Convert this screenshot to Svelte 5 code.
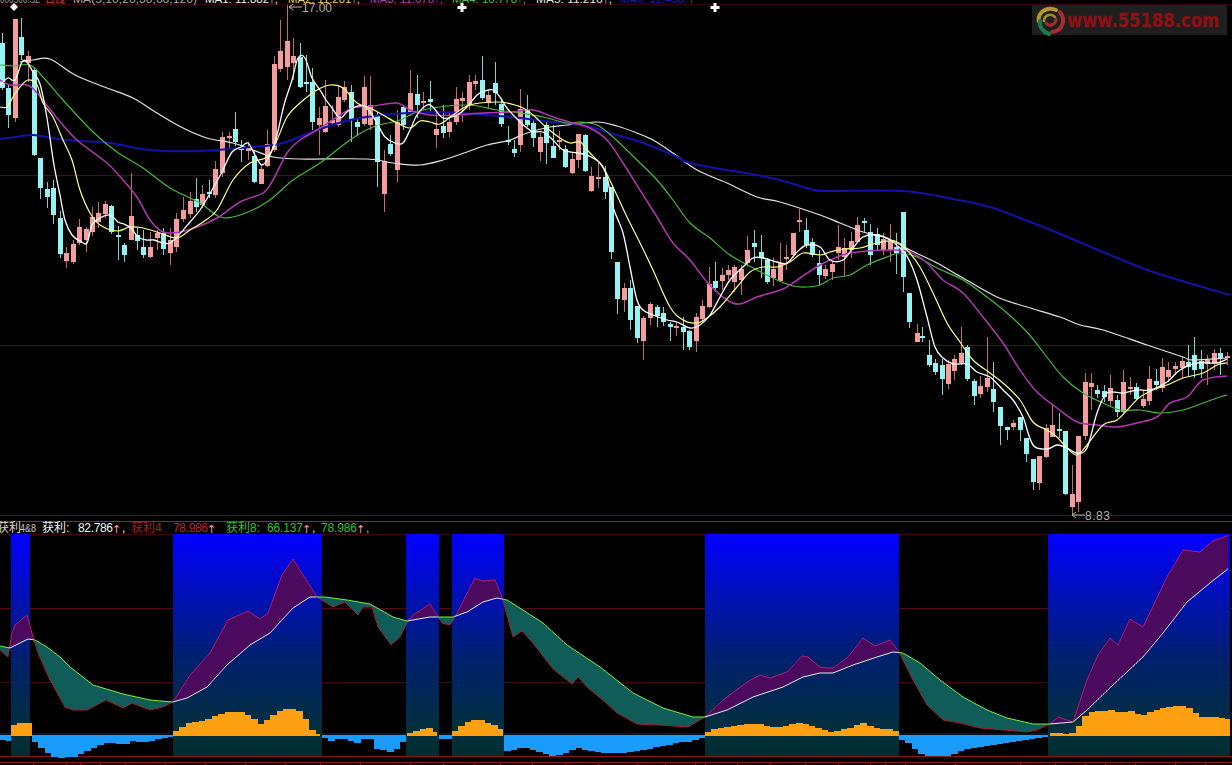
<script>
  // chart data, all in screen pixels: [x, bodyTop, bodyBottom, high, low, up]
  const candles = [
    [2,43,88,33,90,0],[8,88,115,85,128,0],[15,19,118,19,122,1],[21,37,55,18,60,0],[28,56,63,51,82,1],[34,70,155,68,156,0],
    [40,158,188,158,199,0],[47,189,197,182,208,0],[53,188,215,180,224,0],[60,218,254,211,258,0],[66,253,261,247,268,1],[73,244,262,240,264,1],
    [79,227,243,219,245,1],[86,229,240,227,252,1],[92,217,232,207,236,1],[98,213,222,202,228,1],[105,204,214,201,218,1],[111,206,232,205,234,0],
    [118,235,237,226,260,0],[124,245,255,243,262,0],[131,216,240,173,240,1],[137,235,241,228,250,0],[143,247,255,230,258,0],[150,247,257,232,258,1],
    [157,233,238,230,250,1],[163,233,249,228,255,0],[170,240,253,228,265,1],[176,219,247,213,252,1],[183,210,219,197,222,1],[190,201,214,192,218,1],
    [196,199,207,178,212,0],[202,194,205,185,208,1],[209,192,194,180,198,0],[215,169,195,161,198,1],[222,137,173,132,177,1],[229,136,138,132,150,1],
    [235,129,142,112,146,0],[241,147,150,140,162,0],[248,147,151,142,160,1],[254,156,182,150,183,0],[261,169,184,165,184,1],[267,144,166,130,167,1],
    [274,64,150,56,152,1],[280,51,69,20,72,1],[287,41,67,5,80,1],[293,56,63,38,80,1],[300,57,87,43,88,0],[306,82,84,55,92,0],
    [312,82,122,68,130,0],[319,118,125,107,155,1],[325,106,132,80,133,1],[332,120,123,105,125,1],[338,97,125,85,127,1],[344,87,100,81,102,1],
    [351,92,120,85,142,0],[357,122,127,118,136,0],[364,87,124,76,126,1],[370,105,125,76,130,1],[377,115,162,112,187,0],[384,161,194,150,212,1],
    [390,144,154,135,156,0],[397,122,170,110,182,1],[403,107,125,105,130,0],[410,93,113,70,116,1],[417,94,105,75,118,0],[423,101,103,92,110,1],
    [430,99,102,81,112,0],[436,129,135,112,148,1],[443,126,133,105,138,0],[449,122,132,112,137,1],[456,99,122,87,125,1],[462,98,101,92,122,1],
    [469,82,105,75,110,1],[475,81,84,75,90,1],[482,80,98,56,100,0],[488,95,103,90,108,1],[495,83,93,62,105,0],[501,104,124,100,127,0],
    [508,140,142,126,145,0],[514,149,153,140,157,0],[520,109,145,89,152,1],[527,110,125,95,127,0],[533,123,138,120,147,0],[540,137,152,133,161,1],
    [546,125,143,122,164,0],[553,146,158,125,158,0],[559,140,142,131,150,1],[565,149,167,145,168,0],[572,159,173,153,174,1],[578,134,160,134,168,1],
    [585,135,171,134,172,0],[591,176,191,167,192,1],[598,177,179,163,188,1],[605,177,192,166,199,0],[611,187,252,187,259,0],[617,262,299,262,314,0],
    [624,288,300,283,312,1],[630,288,320,280,330,0],[637,306,338,306,343,0],[643,318,341,316,360,1],[650,304,318,302,325,1],[657,307,316,305,327,0],
    [663,313,322,307,326,0],[670,324,327,322,341,0],[676,326,328,322,336,1],[683,327,332,317,350,0],[689,331,347,330,350,0],[696,317,341,313,352,1],
    [702,306,319,300,322,1],[709,284,307,267,308,1],[715,281,288,262,292,0],[722,275,281,268,290,1],[728,270,275,265,280,1],[734,267,282,265,292,1],
    [741,269,280,265,295,1],[747,250,263,236,266,1],[754,243,247,230,262,0],[761,252,258,235,278,0],[767,260,282,258,284,0],[773,269,278,258,286,1],
    [780,263,281,243,282,1],[786,257,259,245,270,1],[793,233,255,233,258,1],[799,220,222,209,232,1],[806,230,245,218,248,0],[812,242,255,238,257,0],
    [819,263,275,250,285,0],[825,269,276,265,279,1],[832,264,272,262,280,1],[838,247,253,225,260,1],[844,248,257,238,276,1],[851,241,250,232,258,1],
    [857,225,242,217,243,1],[864,221,223,218,233,0],[870,232,255,224,265,0],[877,234,245,228,250,0],[883,239,250,233,255,1],[890,241,250,224,262,1],
    [896,247,253,233,274,0],[903,212,277,212,292,0],[909,293,322,293,328,0],[917,333,342,324,342,1],[922,336,338,327,342,0],[929,355,365,340,367,0],
    [935,363,372,359,375,0],[942,365,379,359,395,0],[948,364,384,360,389,1],[954,359,371,355,380,1],[961,353,363,327,365,1],[967,347,379,345,381,0],
    [974,381,396,379,405,0],[980,386,394,376,398,1],[987,378,387,337,392,1],[993,389,402,362,412,0],[1000,407,426,407,445,0],[1007,427,430,427,440,0],
    [1013,423,427,420,430,1],[1020,417,430,417,441,0],[1026,438,454,438,462,0],[1033,459,482,459,490,0],[1039,456,483,456,490,1],[1046,428,457,424,458,1],
    [1052,425,437,405,437,1],[1059,429,431,413,438,0],[1065,431,494,431,495,0],[1072,494,507,465,516,1],[1078,436,502,436,512,1],[1085,382,436,373,440,1],
    [1091,383,387,373,410,1],[1097,390,394,385,398,0],[1104,391,397,385,402,0],[1110,388,401,375,406,1],[1117,400,412,395,417,0],[1123,382,412,370,414,1],
    [1130,387,389,377,395,1],[1136,387,399,383,400,0],[1143,399,406,390,408,1],[1149,379,401,366,405,1],[1156,381,385,369,390,0],[1162,367,388,358,392,1],
    [1168,370,377,362,382,1],[1175,366,369,362,375,1],[1182,361,368,357,378,1],[1188,362,367,345,377,0],[1194,355,370,337,378,0],[1201,361,369,350,378,0],
    [1207,360,364,355,385,1],[1214,353,363,349,370,1],[1220,353,359,348,375,0],[1227,356,358,352,365,1]
  ];

  const ma5 = [[0,85],[8,78],[15,80],[22,62],[27,62],[33,72],[40,84],[47,118],[54,165],[60,195],[65,220],[72,235],[80,241],[87,243],[92,225],[100,218],[110,215],[118,222],[124,224],[131,228],[138,237],[146,240],[154,240],[163,243],[170,243],[178,236],[190,222],[200,210],[212,190],[222,172],[232,152],[241,147],[248,143],[255,155],[262,165],[270,155],[277,135],[284,105],[292,80],[298,58],[305,58],[312,78],[320,90],[326,100],[332,108],[340,118],[347,112],[355,107],[364,106],[372,115],[378,125],[385,137],[395,143],[403,143],[410,130],[417,115],[427,105],[433,107],[443,118],[457,115],[467,107],[477,95],[485,91],[493,90],[500,97],[507,108],[520,122],[527,128],[533,132],[543,132],[553,140],[563,150],[577,153],[587,155],[600,163],[607,177],[613,207],[623,233],[630,267],[637,300],[643,310],[653,315],[667,320],[677,322],[690,328],[700,325],[710,315],[720,297],[730,280],[743,267],[753,258],[763,258],[777,262],[787,263],[797,252],[807,245],[820,247],[830,260],[843,260],[853,248],[863,237],[877,235],[890,240],[900,248],[908,258],[917,280],[927,317],[935,347],[943,358],[953,364],[967,364],[977,372],[990,377],[1003,390],[1013,400],[1023,417],[1033,445],[1047,449],[1057,445],[1067,448],[1077,453],[1087,448],[1097,413],[1107,393],[1123,393],[1137,390],[1150,390],[1167,382],[1180,370],[1197,363],[1217,363],[1227,359]];
  const ma10 = [[0,107],[7,107],[13,97],[20,87],[28,80],[37,85],[43,103],[53,117],[63,140],[72,160],[80,190],[90,213],[100,225],[117,231],[130,227],[143,228],[160,233],[177,238],[190,230],[203,222],[217,210],[233,180],[250,163],[267,157],[277,140],[287,117],[300,103],[317,90],[330,85],[343,88],[357,103],[370,108],[383,115],[397,123],[410,128],[420,121],[430,122],[440,124],[453,115],[467,106],[480,103],[497,102],[507,103],[523,108],[533,115],[547,128],[560,138],[570,143],[580,142],[590,153],[603,167],[613,187],[627,217],[640,243],[653,270],[670,307],[683,320],[697,323],[707,318],[720,307],[737,287],[750,272],[763,267],[777,267],[790,262],[803,253],[820,255],[830,252],[843,249],[860,248],[877,243],[895,241],[907,250],[920,267],[933,293],[947,323],[960,342],[973,360],[990,373],[1003,383],[1020,400],[1033,422],[1047,430],[1057,437],[1067,448],[1077,455],[1087,445],[1103,425],[1117,420],[1130,407],[1140,397],[1153,390],[1167,385],[1183,378],[1203,373],[1217,365],[1227,363]];
  const ma20 = [[0,80],[10,85],[27,85],[37,93],[57,118],[77,140],[107,163],[123,180],[137,197],[150,220],[163,232],[180,232],[197,227],[217,218],[240,202],[263,193],[273,180],[287,153],[300,140],[317,130],[337,117],[353,108],[373,106],[397,103],[410,110],[430,115],[453,115],[483,113],[510,112],[533,110],[553,117],[573,123],[590,128],[607,140],[623,163],[640,190],[657,217],[673,243],[690,260],[708,283],[727,300],[740,304],[757,297],[783,289],[800,278],[820,265],[837,257],[850,253],[867,251],[890,250],[910,252],[927,263],[943,280],[963,293],[983,317],[1003,343],[1020,370],[1037,392],[1057,408],[1077,422],[1097,425],[1117,427],[1137,423],[1157,417],[1170,403],[1187,397],[1203,380],[1227,376]];
  const ma30 = [[0,65],[13,66],[30,65],[43,77],[63,100],[93,132],[117,152],[143,168],[170,188],[200,203],[220,217],[240,215],[267,202],[293,180],[320,163],[350,140],[373,127],[400,120],[423,110],[467,105],[497,110],[520,113],[543,117],[567,123],[580,122],[597,125],[613,137],[637,160],[657,180],[673,200],[690,223],[710,238],[730,255],[757,270],[777,280],[793,286],[807,287],[820,285],[833,278],[850,275],[867,265],[887,257],[900,253],[917,257],[937,268],[963,280],[987,297],[1007,313],[1027,332],[1043,352],[1063,377],[1083,393],[1103,403],[1120,410],[1140,410],[1160,413],[1183,410],[1203,403],[1220,397],[1227,395]];
  const ma60 = [[0,139],[17,137],[33,135],[67,140],[110,143],[150,150],[200,151],[253,147],[283,143],[317,130],[350,120],[383,115],[410,113],[443,112],[510,117],[553,122],[583,125],[610,133],[643,143],[673,155],[690,163],[727,170],[757,175],[787,182],[810,189],[827,191],[903,191],[953,199],[993,208],[1053,231],[1103,252],[1153,272],[1230,295]];
  const ma120 = [[20,62],[33,60],[50,59],[75,75],[107,88],[133,98],[157,113],[183,128],[207,138],[233,143],[253,150],[273,157],[300,159],[367,159],[393,163],[420,165],[443,160],[467,152],[487,145],[510,140],[527,133],[550,127],[567,125],[597,122],[617,126],[637,133],[653,140],[673,153],[697,170],[727,183],[757,197],[780,202],[820,215],[840,223],[863,232],[887,238],[910,250],[937,263],[963,278],[997,297],[1027,307],[1060,317],[1080,325],[1103,330],[1147,345],[1183,357],[1193,360],[1227,358]];

  const lineA = [[0,650],[8,657],[12,633],[15,625],[27,615],[32,633],[38,653],[50,680],[65,707],[73,710],[87,710],[106,700],[123,708],[132,703],[150,710],[163,707],[173,702],[190,675],[210,653],[228,620],[248,611],[260,619],[268,613],[282,575],[293,559],[317,597],[333,607],[345,602],[358,615],[363,607],[372,607],[378,627],[391,645],[400,637],[407,623],[413,615],[430,604],[438,617],[442,623],[450,625],[455,617],[475,578],[482,581],[495,580],[502,597],[513,637],[522,631],[532,642],[553,669],[572,684],[578,677],[587,687],[605,702],[617,713],[637,724],[660,725],[688,727],[705,717],[723,700],[747,682],[760,675],[770,678],[787,672],[802,656],[808,657],[820,667],[827,668],[833,668],[848,657],[863,638],[875,646],[890,640],[899,652],[913,680],[927,705],[943,720],[960,723],[980,728],[1027,732],[1037,730],[1050,724],[1058,717],[1073,722],[1087,680],[1098,655],[1110,638],[1118,645],[1130,619],[1143,627],[1167,577],[1183,550],[1200,552],[1213,541],[1229,535]];
  const lineB = [[0,646],[10,648],[20,643],[28,639],[35,640],[47,647],[60,657],[70,667],[93,685],[123,694],[150,700],[173,702],[187,698],[207,687],[227,665],[250,645],[270,633],[293,608],[310,597],[325,597],[347,600],[370,604],[393,617],[407,621],[430,617],[453,617],[467,612],[483,602],[497,598],[507,600],[523,610],[543,623],[567,645],[600,667],[633,693],[663,708],[693,717],[705,717],[727,710],[753,697],[783,687],[803,677],[820,673],[833,673],[853,665],[877,657],[893,652],[903,653],[920,663],[940,680],[963,697],[987,710],[1007,718],[1033,724],[1050,724],[1073,722],[1087,710],[1113,685],[1143,657],[1163,633],[1187,602],[1210,583],[1229,568]];

  const blocks = [[11,30],[173,322],[406,439],[452,504],[705,899],[1048,1230]];

  // histogram key points: [x, height]
  const orange = [[11,10],[20,13],[32,13],null,[173,3],[180,8],[190,13],[203,15],[213,19],[227,24],[240,24],[253,18],[262,11],[270,19],[283,27],[297,27],[305,18],[312,6],[320,1],null,[407,1],[412,4],[420,6],[427,8],[433,8],[437,3],null,[452,3],[458,6],[463,12],[472,16],[480,16],[487,13],[493,11],[499,10],[503,1],null,[705,3],[717,8],[727,9],[737,11],[750,12],[760,12],[770,9],[783,9],[797,13],[807,12],[817,8],[833,4],[840,6],[853,9],[863,13],[873,8],[887,7],[895,6],[899,3],null,[1050,3],[1063,3],[1070,1],[1077,6],[1082,16],[1089,24],[1107,25],[1115,26],[1118,24],[1134,25],[1140,19],[1146,22],[1158,27],[1173,30],[1185,30],[1192,27],[1200,19],[1217,19],[1230,17]];
  const sky = [[0,3],[8,5],[11,5],null,[32,1],[37,8],[43,13],[50,19],[57,22],[73,21],[83,17],[97,10],[107,7],[128,8],[133,5],[143,7],[157,3],[173,1],null,[322,1],[333,5],[343,2],[357,7],[363,3],[372,3],[375,12],[390,16],[397,13],[406,2],null,[439,3],[452,3],null,[504,10],[509,17],[518,12],[528,12],[537,15],[550,20],[563,18],[577,12],[587,15],[607,17],[620,17],[640,15],[653,12],[677,7],[693,5],[705,1],null,[899,2],[910,8],[917,15],[925,20],[952,20],[958,15],[987,10],[1020,5],[1048,1]];

  const step = 6.47;

  function interp(line, x) {
    if (x <= line[0][0]) return line[0][1];
    for (let i = 1; i < line.length; i++) {
      if (x <= line[i][0]) {
        const [x0, y0] = line[i - 1], [x1, y1] = line[i];
        return y0 + (y1 - y0) * (x - x0) / (x1 - x0);
      }
    }
    return line[line.length - 1][1];
  }

  // Catmull-Rom through the traced points, so moving averages stay round
  function smooth(p) {
    let d = `M${p[0][0]} ${p[0][1]}`;
    for (let i = 0; i < p.length - 1; i++) {
      const a = p[Math.max(i - 1, 0)], b = p[i], c = p[i + 1], e = p[Math.min(i + 2, p.length - 1)];
      const c1 = [b[0] + (c[0] - a[0]) / 6, b[1] + (c[1] - a[1]) / 6];
      const c2 = [c[0] - (e[0] - b[0]) / 6, c[1] - (e[1] - b[1]) / 6];
      d += `C${c1[0].toFixed(1)} ${c1[1].toFixed(1)} ${c2[0].toFixed(1)} ${c2[1].toFixed(1)} ${c[0]} ${c[1]}`;
    }
    return d;
  }

  const poly = (p) => p.map(([x, y]) => `${x.toFixed(1)},${y.toFixed(1)}`).join(' ');

  // split the band between A and B where they cross
  function bands() {
    const out = [];
    let cur = null;
    for (let x = 0; x <= 1228; x++) {
      const a = interp(lineA, x), b = interp(lineB, x);
      const up = a < b;
      if (!cur || cur.up !== up) {
        const head = cur ? cur.a[cur.a.length - 1] : null;
        cur = { up, a: head ? [head] : [], b: head ? [cur.b[cur.b.length - 1]] : [] };
        out.push(cur);
      }
      cur.a.push([x, a]);
      cur.b.push([x, b]);
    }
    return out;
  }
  const runs = bands();

  // stepped bars, one per trading day
  function bars(keys) {
    const out = [];
    let seg = [];
    const flush = () => {
      if (!seg.length) return;
      const start = seg[0][0], end = seg[seg.length - 1][0];
      for (let x = start; x < end; x += step) {
        out.push({ x, w: Math.min(step + 0.5, end - x), h: Math.round(interp(seg, x + step / 2)) });
      }
      seg = [];
    };
    for (const k of keys) {
      if (k) seg.push(k);
      else flush();
    }
    flush();
    return out;
  }
  const orangeBars = bars(orange);
  const skyBars = bars(sky);

  const ticks = [33,66,80,100,125,165,205,245,285,320,360,410,443,474,500,532,565,598,637,665,695,705,737,770,805,838,870,885,905,955,1020,1055,1085,1105,1135,1175,1205];

  const topLegend = [
    { x: 0, w: 40, c: '#9a9a9a', t: '000506.SZ' },
    { x: 45, w: 20, c: '#e04545', t: '日线' },
    { x: 73, w: 124, c: '#a8a8a8', t: 'MA(5,10,20,30,60,120)' },
    { x: 205, w: 73, c: '#f2f2f2', t: 'MA1: 11.882↑,' },
    { x: 288, w: 72, c: '#e8d860', t: 'MA2: 11.201↑,' },
    { x: 370, w: 73, c: '#b040b0', t: 'MA3: 11.078↑,' },
    { x: 452, w: 74, c: '#50b850', t: 'MA4: 10.778↑,' },
    { x: 536, w: 76, c: '#e4e4e4', t: 'MA5: 11.216↑,' },
    { x: 620, w: 70, c: '#1a1ab8', t: 'MA6: 12.458↑' }
  ];

  const arrows = [[112, '#f0a0a0'], [207, '#f0a0a0'], [302, '#f0a0a0'], [356, '#f0a0a0']];
</script>

<svg class="chart" width="1232" height="765" viewBox="0 0 1232 765" role="img" aria-label="K线图">
  <defs>
    <linearGradient id="sky" x1="0" y1="534" x2="0" y2="756" gradientUnits="userSpaceOnUse">
      <stop offset="0" stop-color="#0000ff" />
      <stop offset="0.55" stop-color="#002070" />
      <stop offset="0.9" stop-color="#02303a" />
      <stop offset="1" stop-color="#022c30" />
    </linearGradient>
  </defs>

  <!-- grid -->
  <g class="grid" shape-rendering="crispEdges">
    <line x1="0" x2="1232" y1="4.5" y2="4.5" stroke="#300508" />
    <line x1="0" x2="1232" y1="175.5" y2="175.5" stroke="#520a10" />
    <line x1="0" x2="1232" y1="345.5" y2="345.5" stroke="#520a10" />
    <line x1="0" x2="1232" y1="515.5" y2="515.5" stroke="#6a0c14" />
    <line x1="0" x2="1232" y1="521.5" y2="521.5" stroke="#a81a24" />
    <line x1="0" x2="1232" y1="534.5" y2="534.5" stroke="#3c0a0e" />
    <line x1="0" x2="1232" y1="608.5" y2="608.5" stroke="#520a10" />
    <line x1="0" x2="1232" y1="682.5" y2="682.5" stroke="#400a0e" />
    <line x1="0" x2="1232" y1="756.5" y2="756.5" stroke="#8a1620" />
    <line x1="0" x2="1232" y1="762.5" y2="762.5" stroke="#8a1620" />
    {#each ticks as t}
      <line x1={t + 0.5} x2={t + 0.5} y1="762" y2="765" stroke="#8a1620" />
    {/each}
  </g>

  <!-- candles -->
  <g shape-rendering="crispEdges">
    {#each candles as [x, top, bot, hi, lo, up]}
      <line x1={x + 0.5} x2={x + 0.5} y1={hi} y2={lo} stroke={up ? '#c8686c' : '#78d0d0'} />
      <rect x={x - 2} y={top} width="5" height={Math.max(bot - top, 1)} fill={up ? '#f59c9c' : '#94f4f4'} />
    {/each}
  </g>

  <!-- moving averages -->
  <g fill="none" stroke-linejoin="round">
    <path d={smooth(ma120)} stroke="#e4e4e4" stroke-width="1.2" />
    <path d={smooth(ma60)} stroke="#1212a8" stroke-width="2" />
    <path d={smooth(ma30)} stroke="#48b83a" stroke-width="1.2" />
    <path d={smooth(ma20)} stroke="#b038b0" stroke-width="1.5" />
    <path d={smooth(ma10)} stroke="#ffff8c" stroke-width="1.2" />
    <path d={smooth(ma5)} stroke="#ffffff" stroke-width="1.3" />
  </g>

  <!-- signal marks -->
  <path d="M14 3l4 4-4 4-4-4z" fill="#fff" />
  <path d="M460.500 3h3v3h3v3h-3v3h-3v-3h-3v-3h3zM713.500 3h3v3h3v3h-3v3h-3v-3h-3v-3h3z" fill="#fff" />

  <g class="mono" fill="#b0b0b0">
    <text x="302" y="12" textLength="30">17.00</text>
    <text x="1085" y="520" textLength="25">8.83</text>
  </g>
  <path d="M302 7h-13M293 4l-4 3 4 3" fill="none" stroke="#b8b8b8" />
  <path d="M1085 515h-13M1076 512l-4 3 4 3" fill="none" stroke="#b8b8b8" />

  <g class="small">
    {#each topLegend as l}
      <text x={l.x} y="3" fill={l.c} textLength={l.w} lengthAdjust="spacingAndGlyphs">{l.t}</text>
    {/each}
    <text x="689" y="3" fill="#40c040">↑</text>
  </g>

  <!-- watermark -->
  <rect x="1032" y="5" width="195" height="30" fill="#1f1f1f" />
  <g fill="none" stroke-linecap="round">
    <path d="M1038.500 21C1038 12 1047 6 1056 10" stroke="#b8962c" stroke-width="4" />
    <path d="M1044 21C1044 15 1051 13 1055 17" stroke="#a88c30" stroke-width="2.500" />
    <path d="M1060 12C1066 20 1063 31 1052 32" stroke="#a82c30" stroke-width="4" />
    <path d="M1056 19C1056 25 1049 27 1046 23" stroke="#a02c30" stroke-width="3" />
    <path d="M1040 21C1039 27 1043 32 1049 34" stroke="#187c50" stroke-width="4" />
  </g>
  <text class="brand" x="1067" y="27" textLength="152" lengthAdjust="spacingAndGlyphs">www.55188.com</text>

  <!-- indicator panel -->
  <rect x="0" y="733" width="1232" height="2" fill="#00142a" />
  {#each blocks as [x1, x2]}
    <rect x={x1} y="534" width={x2 - x1} height="222" fill="url(#sky)" />
  {/each}

  {#each orangeBars as b}
    <rect x={b.x} y={736 - b.h} width={b.w} height={b.h} fill="#ffa012" shape-rendering="crispEdges" />
  {/each}
  {#each skyBars as b}
    <rect x={b.x} y="735" width={b.w} height={b.h + 1} fill="#1a9cff" shape-rendering="crispEdges" />
  {/each}

  {#each runs as r}
    <polygon points={poly([...r.a, ...[...r.b].reverse()])} fill={r.up ? '#4c0a5e' : '#105c58'} />
  {/each}
  <g fill="none" stroke-linejoin="round" stroke-width="1">
    {#each runs as r}
      <polyline points={poly(r.a)} stroke={r.up ? '#b01c78' : '#a81c30'} />
      <polyline points={poly(r.b)} stroke={r.up ? '#d8f0e8' : '#78f040'} />
    {/each}
  </g>

  <g class="legend">
    <text x="-3" y="532" fill="#d8d8d8">获利</text>
    <text class="squeeze" x="20" y="532" fill="#c8c8c8" textLength="16" lengthAdjust="spacingAndGlyphs">4&amp;8</text>
    <text x="42" y="532" fill="#f4f4f4">获利:</text>
    <text x="78" y="532" fill="#f4f4f4" textLength="35">82.786</text>
    <text x="122" y="532" fill="#f4f4f4">,</text>
    <text x="131" y="532" fill="#b01c20">获利4</text>
    <text x="173" y="532" fill="#c82024" textLength="35">78.986</text>
    <text x="226" y="532" fill="#30c030">获利8:</text>
    <text x="267" y="532" fill="#30c030" textLength="36">66.137</text>
    <text x="312" y="532" fill="#d8d8d8">,</text>
    <text x="321" y="532" fill="#30c030" textLength="36">78.986</text>
    <text x="366" y="532" fill="#d8a0a0">,</text>
    {#each arrows as [x, c]}
      <text class="arrow" x={x} y="533" fill={c}>↑</text>
    {/each}
  </g>
</svg>

<style>
  :global(body) {
    background: #000;
  }
  .chart {
    display: block;
    background: #000;
  }
  .mono text {
    font-family: "Liberation Sans", sans-serif;
    font-size: 12px;
  }
  .small text {
    font-family: "Liberation Sans", "Noto Sans CJK SC", sans-serif;
    font-size: 11px;
  }
  .legend text {
    font-family: "Liberation Sans", "Noto Sans CJK SC", sans-serif;
    font-size: 12px;
  }
  .legend .squeeze {
    font-size: 10px;
  }
  .legend .arrow {
    font-family: "DejaVu Sans", sans-serif;
    font-size: 11px;
  }
  .brand {
    font-family: "DejaVu Sans", sans-serif;
    font-size: 19px;
    font-weight: 700;
    fill: #8c1014;
    stroke: #8c1014;
    stroke-width: 0.3px;
  }
</style>
